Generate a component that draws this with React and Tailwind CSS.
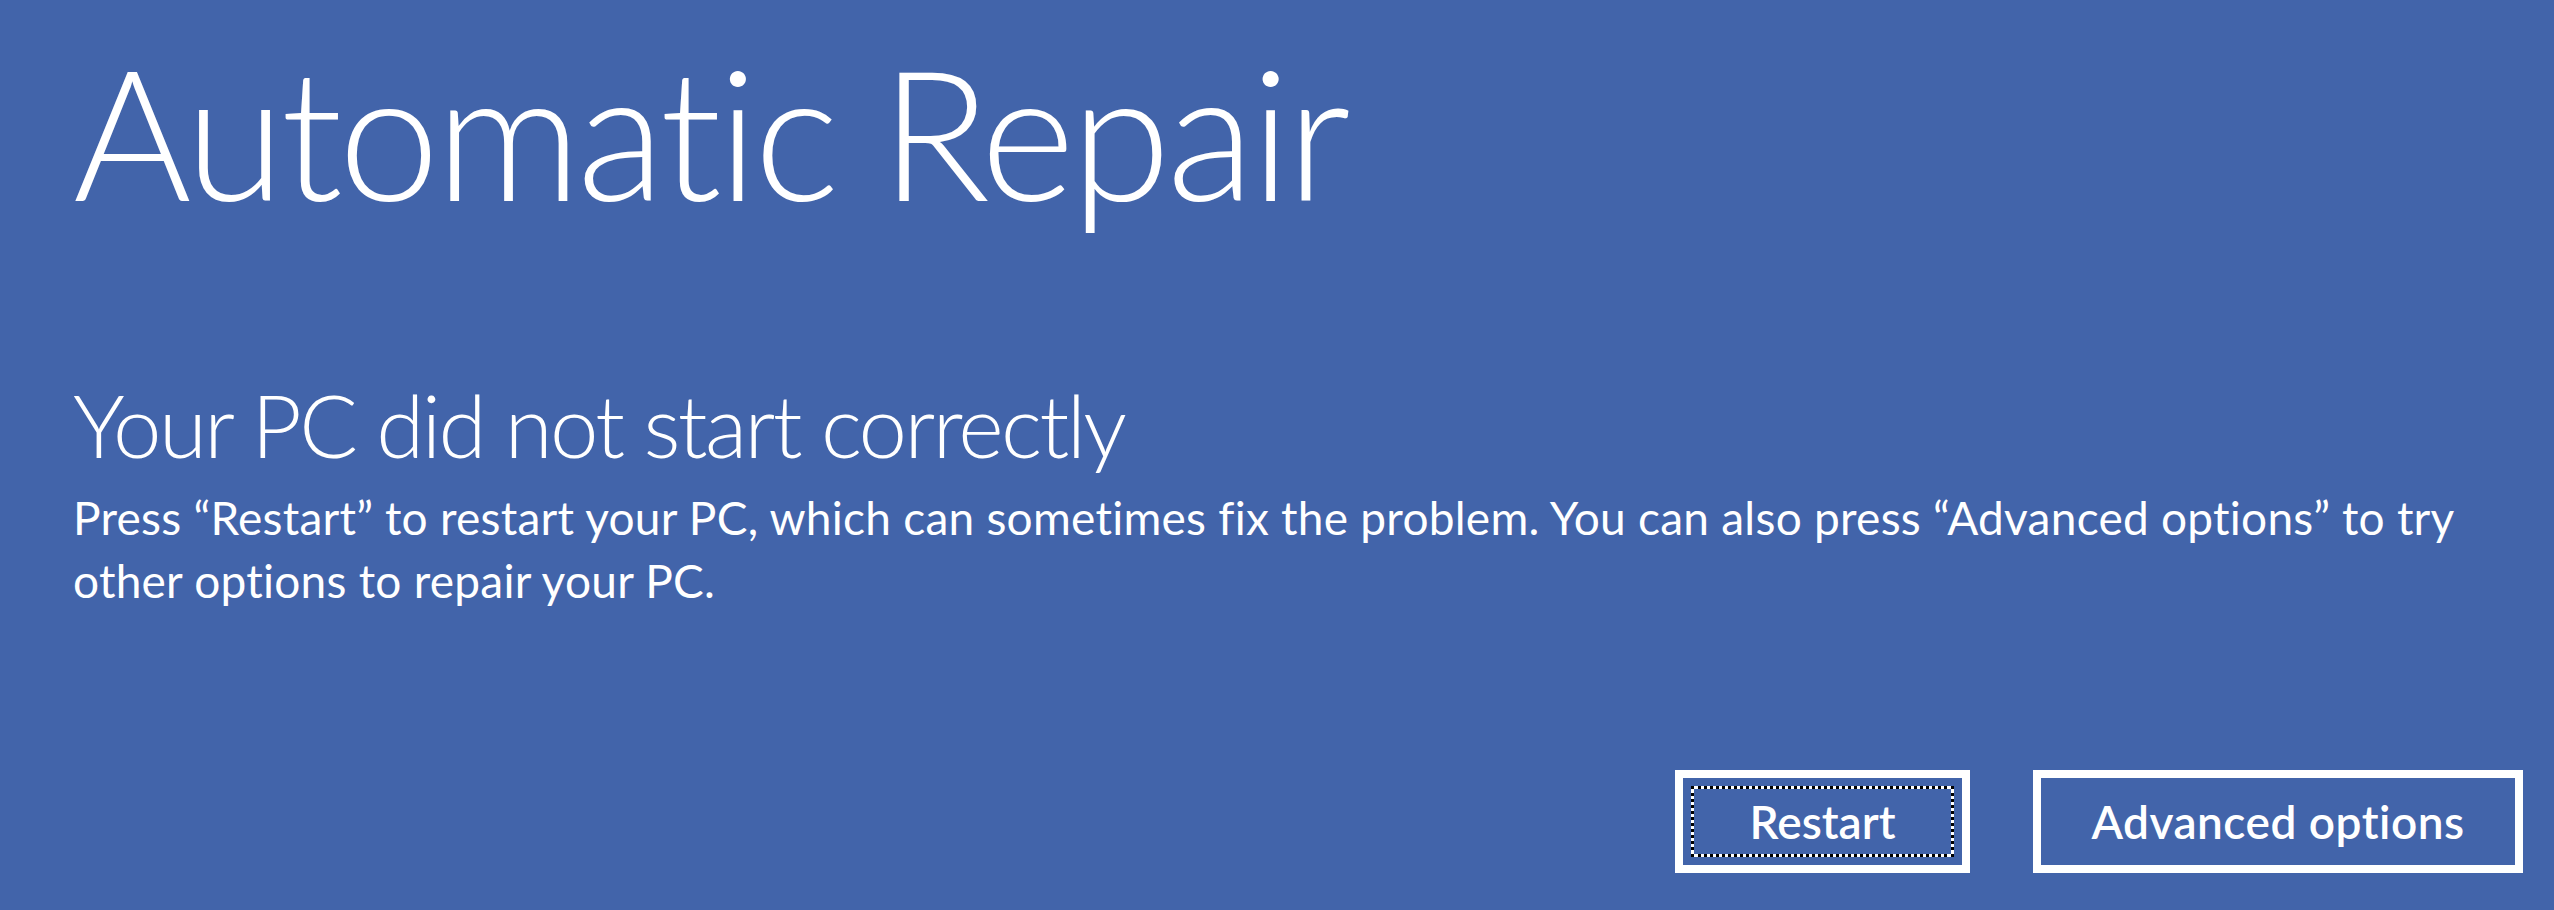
export default function App() {
  return (
    <div
      className="w-full h-[910px] bg-[#4264aa] text-white flex flex-col pl-[73px] pr-[31px] overflow-hidden [font-variant-ligatures:none]"
      style={{ fontFamily: 'Lato, "Open Sans", sans-serif' }}
    >
      <h1 className="mt-[41px] text-[181px] leading-none font-light tracking-[-4px]">
        Automatic Repair
      </h1>
      <h2 className="mt-[159px] text-[87px] leading-none font-light tracking-[-2.6px]">
        Your PC did not start correctly
      </h2>
      <p className="mt-[18px] text-[46px] leading-[63px] font-normal tracking-[0.25px] whitespace-nowrap">
        Press “Restart” to restart your PC, which can sometimes fix the problem. You can also press “Advanced options” to try
        <br />
        other options to repair your PC.
      </p>
      <div className="mt-auto mb-[37px] flex justify-end gap-[63px]">
        <button className="w-[295px] h-[103px] border-[8px] border-white p-[8px] flex">
          <span className="flex-1 flex items-center justify-center bg-white border-[3px] border-dotted border-black shadow-[inset_0_0_0_200px_#4264aa] text-[46px] font-semibold">
            Restart
          </span>
        </button>
        <button className="w-[490px] h-[103px] border-[8px] border-white flex items-center justify-center text-[46px] font-semibold tracking-[0.5px]">
          Advanced options
        </button>
      </div>
    </div>
  );
}
